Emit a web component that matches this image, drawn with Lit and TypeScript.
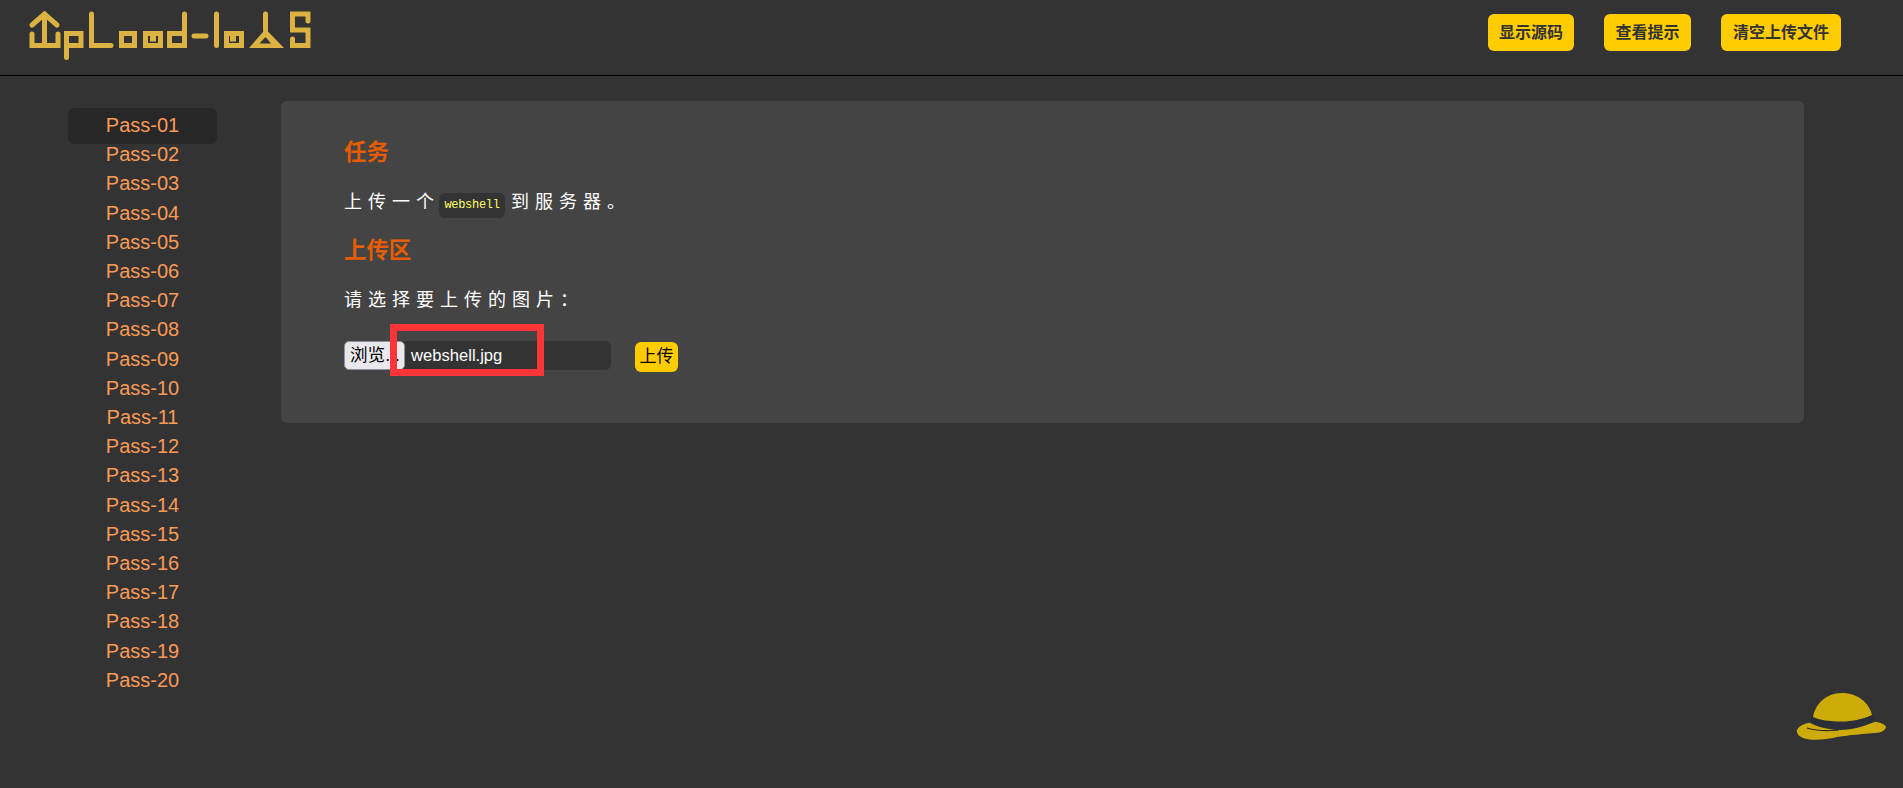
import { LitElement, html, css, svg } from "lit";
import { customElement } from "lit/decorators.js";

const passes = Array.from({ length: 20 }, (_, i) => `Pass-${String(i + 1).padStart(2, "0")}`);

const logo = svg`<svg class="logo" width="320" height="62" viewBox="0 0 320 62" aria-label="Upload-labs" role="img">
  <g fill="none" stroke="#dcb342" stroke-width="5" stroke-linejoin="miter" stroke-linecap="round">
    <path d="M32 25L44.500 14L57 25"/><path d="M44.500 14V45"/><path d="M32 34V45.500H58V34"/>
    <path d="M66.500 57.500V33.500H81V45.500H67"/>
    <path d="M91.500 14V45.500H111"/>
    <rect x="121.500" y="33.500" width="13" height="12"/>
    <rect x="145.500" y="33.500" width="15" height="12"/>
    <path d="M184.500 14V45.500H169.500V33.500H184"/>
    <path d="M194 36H206"/>
    <path d="M216.500 14V45.500"/>
    <rect x="226.500" y="33.500" width="15" height="12"/>
    <path d="M265.500 14V30"/>
    <path d="M292.500 39V45.500H308V30H292.500V14H308V21"/>
  </g>
  <rect x="150" y="36" width="6" height="5.500" fill="#dcb342"/>
  <rect x="230" y="36" width="6" height="5.500" fill="#dcb342"/>
  <path fill-rule="evenodd" fill="#dcb342" d="M249 48L265.500 29L284 48ZM259.500 43.500H271L265.500 37Z"/>
</svg>`;

const hat = svg`<svg class="hat" width="92" height="50" viewBox="0 0 92 50" aria-hidden="true">
  <path fill="#2b2d38" d="M17 24L78 22L80 30L46 39L14 32Z"/>
  <path fill="#cdac0a" d="M18 25C20 13 30 1 47 1C63 1 74 11 77 23C68 27 58 29.500 46 29.500C35 29.500 24 28 18 25Z"/>
  <path fill="#cdac0a" d="M1.700 39C3 34 10 31 15 30.700C22 35 35 38 45 38C58 38 70 34 80 29.700C85 30 91 33 91 35C90 40 83 41 78 41C68 42 55 43 42 45C30 48 15 49 8 46C4 44 2 42 1.700 39Z"/>
  <path fill="none" stroke="#2b2d38" stroke-width="1.200" d="M12 36C22 39 34 39 44 38"/>
</svg>`;

@customElement("app-root")
export class AppRoot extends LitElement {
  static styles = css`
    :host { display: block; min-height: 788px; background: #333; font-family: "Liberation Sans", Arial, "Noto Sans CJK SC", sans-serif; color: #fff; overflow: hidden; position: relative; }
    .header { height: 75px; border-bottom: 1px solid #000; display: flex; justify-content: space-between; box-sizing: content-box; }
    .logo { display: block; }
    .actions { display: flex; gap: 30px; padding: 14px 62px 0 0; align-items: flex-start; }
    .btn { height: 37px; padding: 0 11px; background: #fc0; color: #333; font: bold 16px/37px "Liberation Sans", "Noto Sans CJK SC", sans-serif; border-radius: 6px; white-space: nowrap; }
    .btn:nth-child(2) { padding: 0 11.500px; }
    .btn:nth-child(3) { padding: 0 12px; }
    .body { display: flex; padding: 25px 99px 0 68px; }
    .menu { width: 149px; flex: none; margin: 10px 0 0; padding: 0; list-style: none; text-align: center; font-size: 20px; line-height: 29.200px; color: #fa9a55; }
    .menu li { display: block; }
    .menu li.active { background: #272727; border-radius: 6px; padding: 3px 0 3.500px; margin: -3px 0 -3.500px; }
    .card { flex: 1; margin-left: 64px; height: 322px; background: #444; border-radius: 6px; padding: 39px 63px 0; box-sizing: border-box; }
    h3 { margin: 0; font: bold 22.400px/26px "Liberation Sans", "Noto Sans CJK SC", sans-serif; color: #e65c00; }
    p { margin: 0; font-size: 18px; line-height: 26px; letter-spacing: 6px; font-family: "Liberation Sans", "Noto Sans CJK SC", sans-serif; }
    .t1 { margin-top: 22.500px; }
    .h2 { margin-top: 20px; }
    .t2 { margin-top: 23px; }
    code { display: inline-block; font: 12px/25px "Liberation Mono", monospace; letter-spacing: -0.300px; color: #ff6; background: #333; border-radius: 6px; padding: 0 5.400px; margin: 0 6px 0 -1px; vertical-align: 0; }
    .upload { display: flex; align-items: flex-start; margin-top: 28px; }
    .file { position: relative; width: 267px; height: 29px; display: flex; background: #333; border-radius: 6px; }
    .browse { width: 61px; height: 29px; box-sizing: border-box; background: #e9e9ed; border: 1px solid #8f8f9d; border-radius: 5px; color: #000; font: 17.600px/27px "Liberation Sans", "Noto Sans CJK SC", sans-serif; padding-left: 5px; overflow: hidden; white-space: nowrap; }
    .name { font-size: 16.600px; line-height: 29px; padding-left: 6px; }
    .mark { position: absolute; left: 46px; top: -17px; width: 154px; height: 52px; box-sizing: border-box; border: 7px solid #fc3538; }
    .go { margin: 1px 0 0 24px; height: 30px; width: 43px; background: #fc0; color: #000; border-radius: 6px; text-align: center; font: 17px/30px "Liberation Sans", "Noto Sans CJK SC", sans-serif; }
    .hat { position: absolute; left: 1795px; top: 692px; }
  `;

  render() {
    return html`
      <div class="header">
        ${logo}
        <div class="actions">
          <div class="btn">显示源码</div>
          <div class="btn">查看提示</div>
          <div class="btn">清空上传文件</div>
        </div>
      </div>
      <div class="body">
        <ul class="menu">
          ${passes.map((p, i) => html`<li class=${i === 0 ? "active" : ""}>${p}</li>`)}
        </ul>
        <div class="card">
          <h3>任务</h3>
          <p class="t1">上传一个<code>webshell</code>到服务器。</p>
          <h3 class="h2">上传区</h3>
          <p class="t2">请选择要上传的图片：</p>
          <div class="upload">
            <div class="file">
              <div class="browse">浏览...</div>
              <div class="name">webshell.jpg</div>
              <div class="mark"></div>
            </div>
            <div class="go">上传</div>
          </div>
        </div>
      </div>
      ${hat}
    `;
  }
}
